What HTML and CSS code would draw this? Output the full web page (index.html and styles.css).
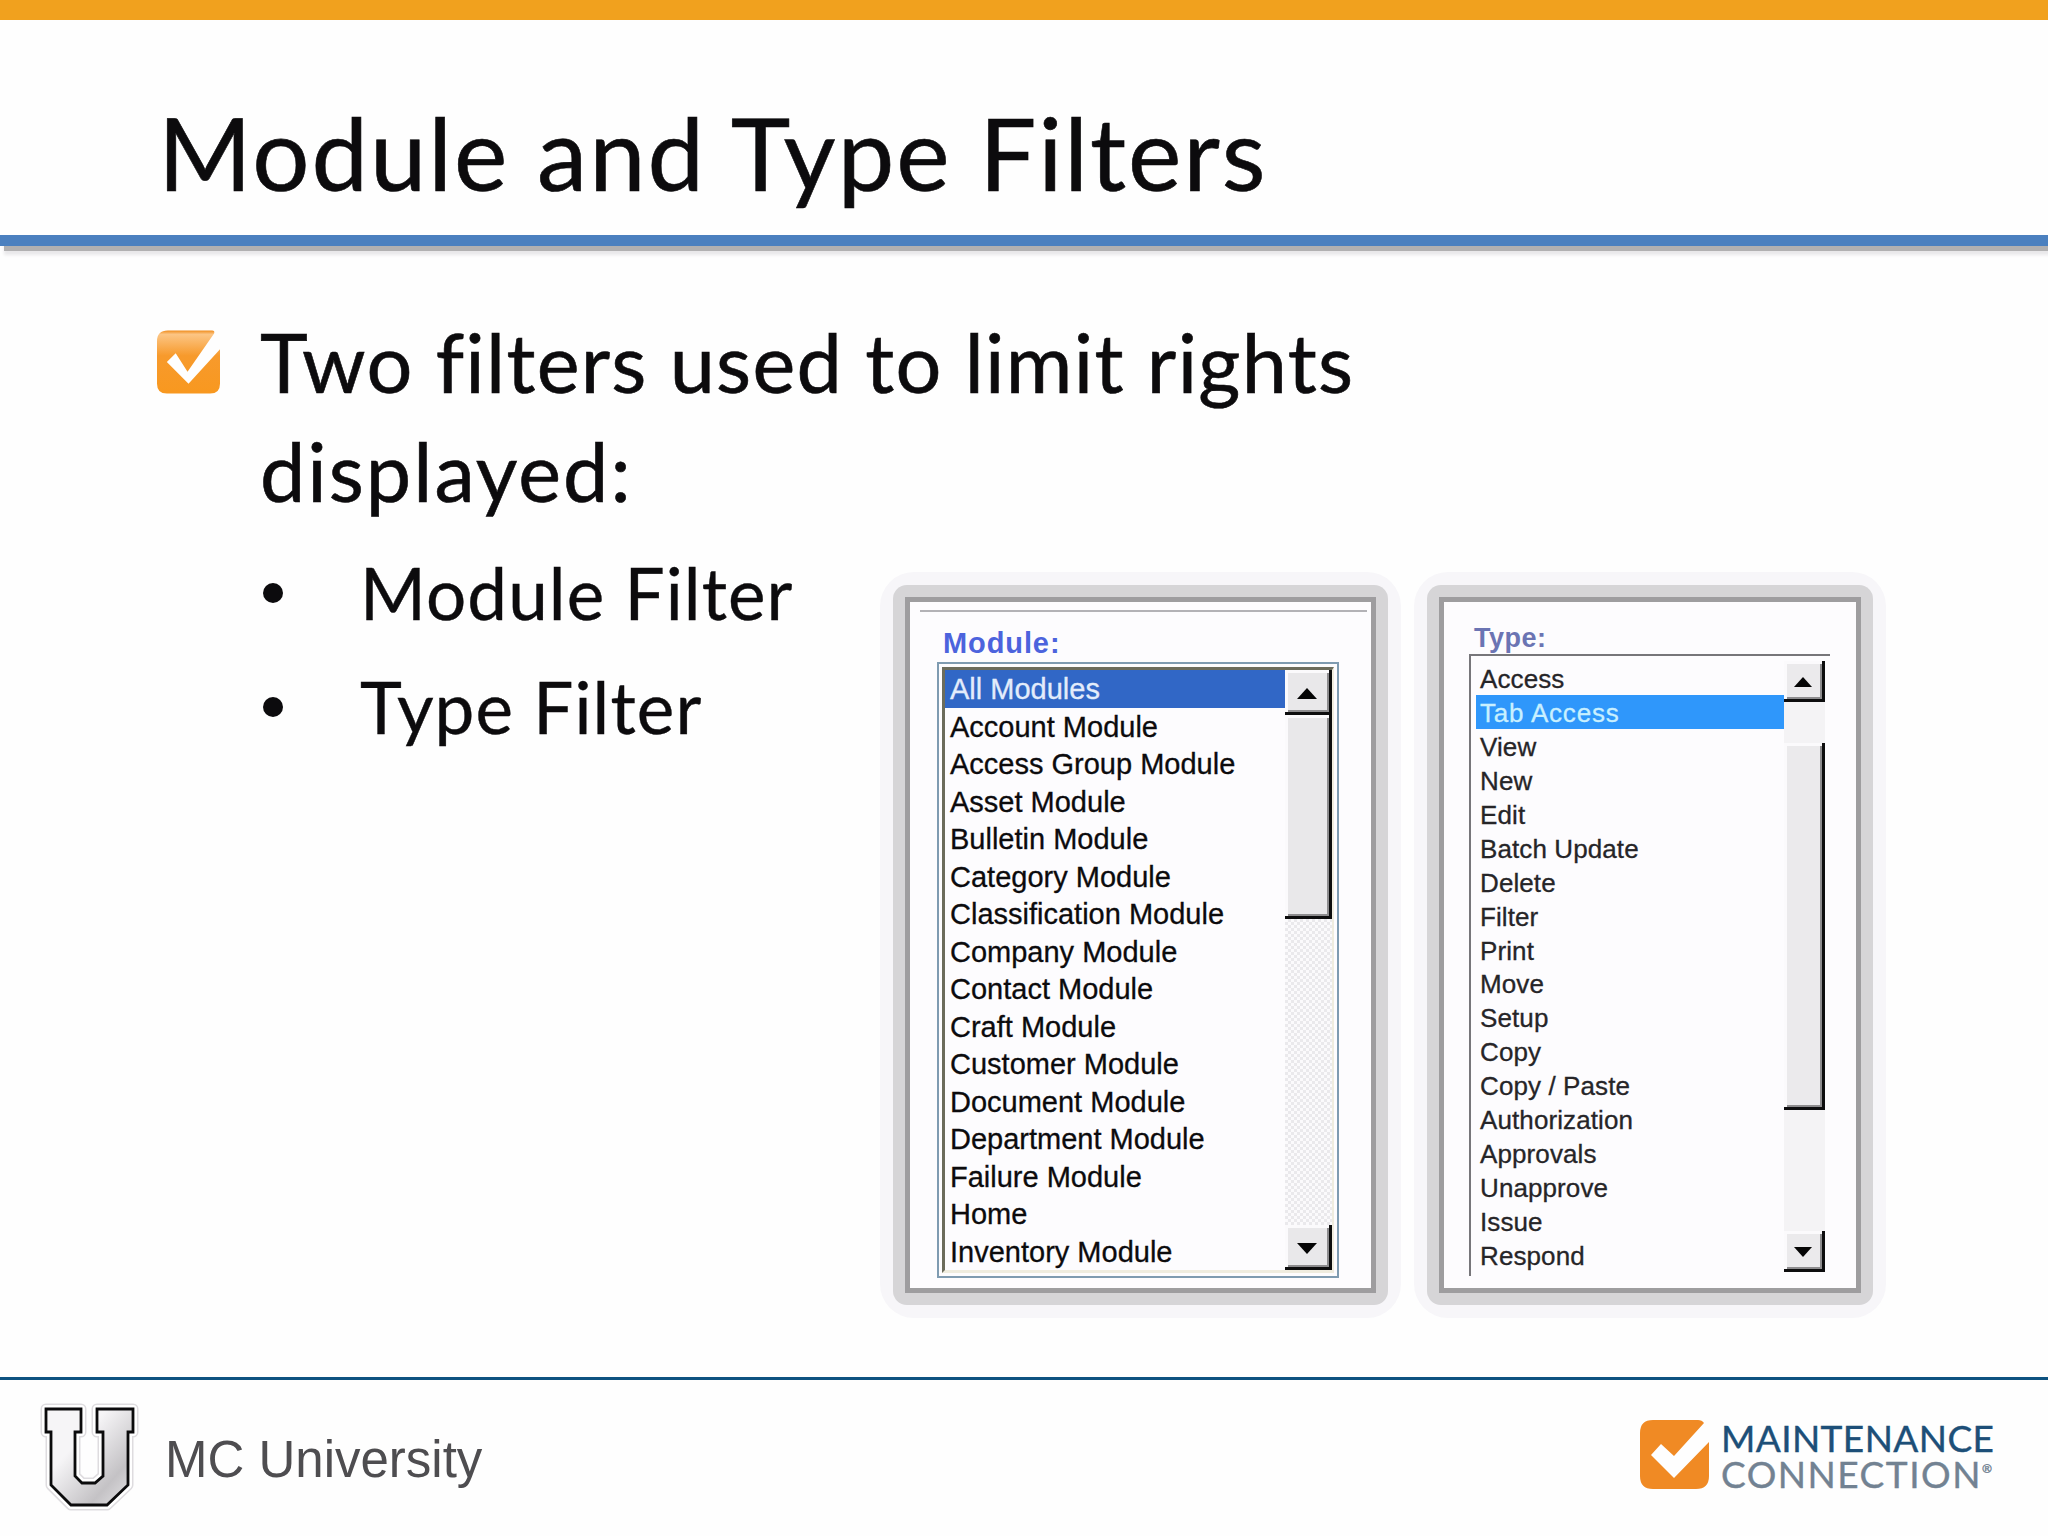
FILE: index.html
```html
<!DOCTYPE html>
<html lang="en">
<head>
  <meta charset="UTF-8" />
  <meta name="viewport" content="width=device-width, initial-scale=1.0"/>
  <title>Module and Type Filters</title>
  <link rel="stylesheet" href="styles.css">
</head>
<body>
  <header>
    <h1>Module and Type Filters</h1>
  </header>

  <main>
    <div class="intro">
      <svg class="check" viewBox="0 0 64 64">
        <defs>
          <linearGradient id="gloss" x1="0" y1="0" x2="0" y2="1">
            <stop offset="0" stop-color="#f08c1c"/>
            <stop offset="0.06" stop-color="#fcc584"/>
            <stop offset="0.4" stop-color="#f79a2c"/>
            <stop offset="1" stop-color="#f8981f"/>
          </linearGradient>
        </defs>
        <path fill="url(#gloss)" d="M11 0H56Q59 0 58 3L31 42L19 23L10 32L32 54L64 19V54Q64 64 54 64H10Q0 64 0 54V11Q0 0 11 0Z"/>
      </svg>
      <p>Two filters used to limit rights <span class="wide">displayed:</span></p>
    </div>

    <div class="columns">
      <ul class="filters">
        <li>Module Filter</li>
        <li>Type Filter</li>
      </ul>

      <section class="panel module">
        <h2>Module:</h2>
        <div class="listbox">
          <ul class="options">
            <li class="selected">All Modules</li>
            <li>Account Module</li>
            <li>Access Group Module</li>
            <li>Asset Module</li>
            <li>Bulletin Module</li>
            <li>Category Module</li>
            <li>Classification Module</li>
            <li>Company Module</li>
            <li>Contact Module</li>
            <li>Craft Module</li>
            <li>Customer Module</li>
            <li>Document Module</li>
            <li>Department Module</li>
            <li>Failure Module</li>
            <li>Home</li>
            <li>Inventory Module</li>
          </ul>
          <div class="scrollbar">
            <div class="btn"><span class="arrow up"></span></div>
            <div class="btn thumb"></div>
            <div class="btn last"><span class="arrow down"></span></div>
          </div>
        </div>
      </section>

      <section class="panel type">
        <h2>Type:</h2>
        <div class="listbox">
          <ul class="options">
            <li>Access</li>
            <li class="selected">Tab Access</li>
            <li>View</li>
            <li>New</li>
            <li>Edit</li>
            <li>Batch Update</li>
            <li>Delete</li>
            <li>Filter</li>
            <li>Print</li>
            <li>Move</li>
            <li>Setup</li>
            <li>Copy</li>
            <li>Copy / Paste</li>
            <li>Authorization</li>
            <li>Approvals</li>
            <li>Unapprove</li>
            <li>Issue</li>
            <li>Respond</li>
          </ul>
          <div class="scrollbar">
            <div class="btn"><span class="arrow up"></span></div>
            <div class="btn thumb"></div>
            <div class="btn last"><span class="arrow down"></span></div>
          </div>
        </div>
      </section>
    </div>
  </main>

  <footer>
    <svg class="u-logo" viewBox="0 0 102 110">
      <defs>
        <linearGradient id="silver" x1="0" y1="0" x2="1" y2="1">
          <stop offset="0.35" stop-color="#f6f5f7"/>
          <stop offset="0.75" stop-color="#c4c2c5"/>
          <stop offset="1" stop-color="#e8e7e9"/>
        </linearGradient>
      </defs>
      <g fill="none" stroke-linejoin="round">
        <path stroke="#dedcdf" stroke-width="11" d="M7 7H42V30H36V74L43 81H56L64 74V30H58V7H94V30H89V83L68 103H32L12 83V30H7Z"/>
        <path stroke="#fff" stroke-width="8" d="M7 7H42V30H36V74L43 81H56L64 74V30H58V7H94V30H89V83L68 103H32L12 83V30H7Z"/>
      </g>
      <path fill="url(#silver)" stroke="#0b0b0c" stroke-width="2.8" d="M7 7H42V30H36V74L43 81H56L64 74V30H58V7H94V30H89V83L68 103H32L12 83V30H7Z"/>
    </svg>
    <span class="school">MC University</span>
    <div class="brand">
      <svg class="brand-mark" viewBox="0 0 69 69">
        <path fill="#f08a24" d="M13 0H58Q62 0 64 3L34 36L21 24L11 35L34 58L69 22V56Q69 69 56 69H13Q0 69 0 56V13Q0 0 13 0Z"/>
      </svg>
      <div class="brand-name">
        <div class="line-one">MAINTENANCE</div>
        <div class="line-two">CONNECTION<sup>®</sup></div>
      </div>
    </div>
  </footer>
</body>
</html>
```

FILE: styles.css
```css
* {
  box-sizing: border-box;
}
body {
  margin: 0;
  width: 2048px;
  height: 1536px;
  overflow: hidden;
  background: #fefefe;
  color: #0c0b0d;
  font-family: Lato, Carlito, sans-serif;
  display: flex;
  flex-direction: column;
}
h1, h2, p, ul {
  margin: 0;
  padding: 0;
  font-weight: normal;
}
ul {
  list-style: none;
}

/* title bar */
header {
  height: 246px;
  flex: none;
  padding: 72px 0 0 158px;
  border-top: 20px solid #f1a11e;
  border-bottom: 11px solid #4b80bf;
  box-shadow: 4px 5px 0 #b1b0b1, 4px 9px 3px #e9e8ea;
}
h1 {
  font-size: 101px;
  line-height: 120px;
  letter-spacing: 1.95px;
  white-space: nowrap;
  -webkit-text-stroke: 0.6px #0c0b0d;
}

main {
  height: 1131px;
  flex: none;
  padding: 61px 0 0 157px;
}
.intro {
  display: flex;
  align-items: flex-start;
}
.check {
  width: 63px;
  height: 64px;
  margin: 23px 40px 0 0;
}
.intro p {
  width: 1130px;
  font-size: 81px;
  line-height: 109px;
  letter-spacing: 1.3px;
  -webkit-text-stroke: 0.6px #0c0b0d;
}
.intro .wide {
  letter-spacing: 2px;
}
.columns {
  display: flex;
  align-items: flex-start;
}
.filters {
  width: 753px;
  padding: 11px 0 0 105px;
  font-size: 71px;
  line-height: 114px;
  letter-spacing: 1.1px;
  -webkit-text-stroke: 0.4px #0c0b0d;
}
.filters li {
  display: flex;
  align-items: center;
  white-space: nowrap;
}
.filters li::before {
  content: "";
  width: 20px;
  height: 20px;
  margin: 0 77px 0 1px;
  border-radius: 50%;
  background: #0c0b0d;
}

/* framed list boxes */
.panel {
  position: relative;
  height: 686px;
  margin-top: 77px;
  background: #fdfcfe;
  box-shadow: 0 0 0 5px #9e9d9f;
  font-family: "Liberation Sans", Arial, sans-serif;
}
.panel::before,
.panel::after {
  content: "";
  position: absolute;
  z-index: -1;
}
.panel::before {
  inset: -30px;
  border-radius: 34px;
  background: #f7f6f9;
}
.panel::after {
  inset: -17px;
  border-radius: 14px;
  background: #d6d5d7;
}
.panel h2 {
  font-weight: bold;
}
.listbox {
  display: flex;
}
.options {
  flex: 1;
}
.options li {
  white-space: nowrap;
}
.scrollbar {
  display: flex;
  flex-direction: column;
  background: repeating-conic-gradient(#fbfafc 0 25%, #eae9ec 0 50%) 0 0 / 6px 6px;
}
.btn {
  display: flex;
  justify-content: center;
  align-items: center;
  padding-top: 4px;
  background: #e9e8ea;
  border-right: 3px solid #0d0d0e;
  border-bottom: 3px solid #0d0d0e;
  box-shadow: inset 3px 3px 0 #fbfafc, inset -2px -2px 0 #8d8c8e;
}
.last {
  margin-top: auto;
}
.arrow {
  border: 10px solid transparent;
}
.up {
  border-top: 0;
  border-bottom: 11px solid #050505;
}
.down {
  border-bottom: 0;
  border-top: 11px solid #050505;
}

.module {
  width: 461px;
  padding: 8px 0 0 10px;
}
.module h2 {
  width: 447px;
  height: 52px;
  padding: 15px 0 0 23px;
  border-top: 2px solid #b3b2b6;
  color: #4c63dd;
  font-size: 29px;
  line-height: 33px;
  letter-spacing: 0.9px;
}
.module .listbox {
  width: 402px;
  height: 616px;
  margin-left: 17px;
  padding: 3px;
  border: 2px solid #7f9bb1;
}
.module .options {
  border-left: 3px solid #6c6c5c;
  border-top: 3px solid #6c6c5c;
  border-bottom: 3px solid #efecdf;
  font-size: 29px;
  line-height: 39px;
  -webkit-text-stroke: 0.3px;
}
.module .options li {
  height: 37.5px;
  padding-left: 5px;
}
.module .selected {
  background: #3167c6;
  color: #e3ecfb;
}
.module .scrollbar {
  width: 49px;
  border-top: 3px solid #6c6c5c;
  border-right: 2px solid #efecdf;
  border-bottom: 3px solid #efecdf;
}
.module .btn {
  height: 45px;
}
.module .thumb {
  height: 204px;
}

.type {
  width: 412px;
  margin-left: 73px;
  padding: 21px 0 0 25px;
}
.type h2 {
  height: 31px;
  padding-left: 5px;
  color: #6b74b3;
  font-size: 27px;
  line-height: 30px;
  letter-spacing: 0.5px;
}
.type .listbox {
  width: 361px;
  height: 622px;
  border-left: 2px solid #77767a;
  border-top: 2px solid #77767a;
}
.type .options {
  padding: 5px 0 0 5px;
  color: #262528;
  font-size: 26px;
  line-height: 36px;
  letter-spacing: 0.1px;
  -webkit-text-stroke: 0.3px;
}
.type .options li {
  height: 33.94px;
  padding-left: 4px;
}
.type .options .selected {
  background: #2f97fb;
  color: #c9f0ff;
  letter-spacing: 0.8px;
}
.type .scrollbar {
  width: 41px;
  height: 611px;
  margin: 5px 5px 0 0;
  background: #f4f3f5;
}
.type .btn {
  height: 41px;
  background: #ebeaec;
}
.type .thumb {
  height: 367px;
  margin-top: 41px;
}
.type .arrow {
  border-left-width: 9px;
  border-right-width: 9px;
}
.type .up {
  border-bottom-width: 10px;
}
.type .down {
  border-top-width: 10px;
}

footer {
  flex: 1;
  display: flex;
  align-items: flex-start;
  border-top: 3px solid #0d5280;
  font-family: "Liberation Sans", Arial, sans-serif;
}
.u-logo {
  width: 102px;
  height: 110px;
  margin: 22px 0 0 39px;
}
.school {
  margin: 51px 0 0 24px;
  color: #4e4d50;
  font-size: 51px;
  line-height: 58px;
}
.brand {
  display: flex;
  margin: 40px 53px 0 auto;
}
.brand-mark {
  width: 69px;
  height: 69px;
}
.brand-name {
  width: 274px;
  margin-left: 12px;
  font-family: Lato, sans-serif;
  font-size: 37px;
  line-height: 36px;
  white-space: nowrap;
  -webkit-text-stroke: 0.4px;
}
.line-one {
  color: #1d4f78;
  letter-spacing: 0.4px;
}
.line-two {
  color: #728292;
  letter-spacing: 1.5px;
}
.line-two sup {
  font-size: 12px;
  line-height: 0;
  vertical-align: 15px;
}
```
